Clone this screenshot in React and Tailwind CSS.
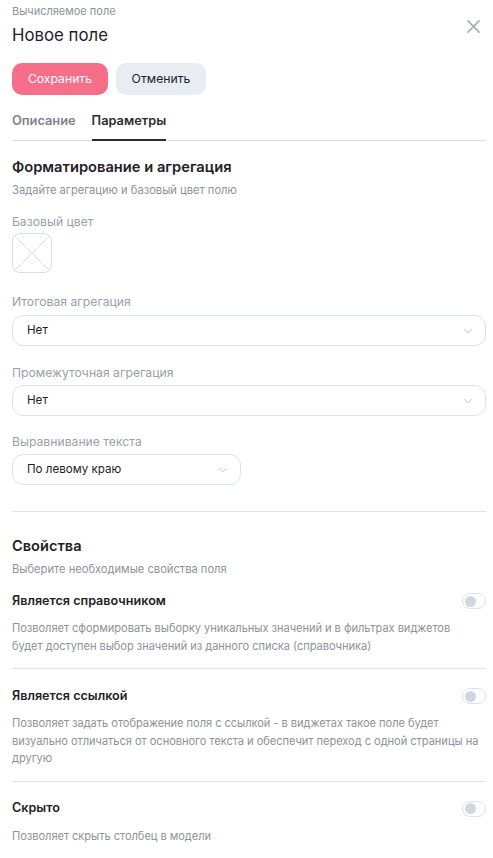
import React from "react";
import { ChevronDown } from "lucide-react";

const font = { fontFamily: "Inter, 'Noto Sans', sans-serif" };

const Select = ({ value, className = "" }) => (
  <div
    className={`flex items-center justify-between h-[31px] pl-[14px] pr-[10px] border border-[#dde1ea] rounded-[11px] ${className}`}
  >
    <span className="text-[11.6px] text-[#1f2129]">{value}</span>
    <ChevronDown className="w-[14px] h-[14px] text-[#b3b8c4]" strokeWidth={1.4} />
  </div>
);

const Toggle = () => (
  <div className="w-[24px] h-[16px] rounded-full border border-[#dde1ea] flex items-center pl-[2px]">
    <div className="w-[11px] h-[11px] rounded-full bg-[#d0d6e1]" />
  </div>
);

const Property = ({ title, first, children }) => (
  <div className={`border-b border-[#dfe2ea] pb-[13px] ${first ? "pt-[15px]" : "pt-[18px]"}`}>
    <div className="flex items-center justify-between h-[18px]">
      <span className="text-[12.6px] font-semibold text-[#1f2129]">{title}</span>
      <Toggle />
    </div>
    <p className="mt-[10px] text-[11.1px] tracking-[-0.05px] leading-[17.5px] text-[#8e929c] whitespace-nowrap">
      {children}
    </p>
  </div>
);

export default function App() {
  return (
    <div className="w-[493px] h-[858px] overflow-hidden bg-white pl-[12px] pr-[7px]" style={font}>
      {/* Header */}
      <div className="flex justify-between pt-[3px]">
        <div>
          <div className="text-[11px] text-[#8e929c] leading-[16px]">Вычисляемое поле</div>
          <div className="text-[16.8px] text-[#1f2129] leading-[24px] mt-[4px]">Новое поле</div>
        </div>
        <svg viewBox="0 0 14 14" className="w-[13px] h-[13px] mt-[17px] mr-[6px]">
          <path d="M1 1L13 13M13 1L1 13" stroke="#a9aebb" strokeWidth="1.8" strokeLinecap="round" />
        </svg>
      </div>

      <div className="flex gap-[8px] mt-[16px]">
        <button className="h-[32px] w-[96px] rounded-[10px] bg-[#f76e8b] text-white text-[12.2px]">
          Сохранить
        </button>
        <button className="h-[32px] w-[90px] rounded-[10px] bg-[#e9ecf3] text-[#1f2129] text-[12.2px]">
          Отменить
        </button>
      </div>

      {/* Tabs */}
      <div className="flex gap-[16px] mt-[17px] border-b border-[#dcdfe7]">
        <div className="pb-[9px] leading-[18px] text-[12.8px] font-semibold text-[#7d828e] border-b-2 border-transparent -mb-px">
          Описание
        </div>
        <div className="pb-[9px] leading-[18px] text-[12.8px] font-semibold text-[#2a2c33] border-b-2 border-[#2a2c33] -mb-px">
          Параметры
        </div>
      </div>

      {/* Formatting */}
      <div className="pt-[16px] pb-[26px] border-b border-[#dfe2ea]">
        <h2 className="text-[14.7px] font-semibold text-[#1f2129] leading-[20px]">Форматирование и агрегация</h2>
        <p className="mt-[5px] text-[11.15px] text-[#8e929c] leading-[16px]">Задайте агрегацию и базовый цвет полю</p>

        <div className="mt-[15px] text-[12.2px] text-[#9aa0ad] leading-[18px]">Базовый цвет</div>
        <div className="mt-[2px] w-[40px] h-[40px] rounded-[8px] border border-[#d8dce5] overflow-hidden">
          <svg viewBox="0 0 40 40" className="w-full h-full">
            <line x1="0" y1="0" x2="40" y2="40" stroke="#dadee6" strokeWidth="1" />
            <line x1="40" y1="0" x2="0" y2="40" stroke="#dadee6" strokeWidth="1" />
          </svg>
        </div>

        <div className="mt-[20px] text-[12.2px] text-[#9aa0ad] leading-[18px]">Итоговая агрегация</div>
        <Select value="Нет" className="mt-[4px]" />

        <div className="mt-[18px] text-[12.2px] text-[#9aa0ad] leading-[18px]">Промежуточная агрегация</div>
        <Select value="Нет" className="mt-[3px]" />

        <div className="mt-[17px] text-[12.2px] text-[#9aa0ad] leading-[18px]">Выравнивание текста</div>
        <Select value="По левому краю" className="mt-[3px] w-[229px]" />
      </div>

      {/* Properties */}
      <div className="pt-[24px]">
        <h2 className="text-[14.6px] font-semibold text-[#1f2129] leading-[20px]">Свойства</h2>
        <p className="mt-[5px] text-[11.15px] text-[#8e929c] leading-[16px]">Выберите необходимые свойства поля</p>
        <Property title="Является справочником" first>
          Позволяет сформировать выборку уникальных значений и в фильтрах виджетов
          <br />
          будет доступен выбор значений из данного списка (справочника)
        </Property>
        <Property title="Является ссылкой">
          Позволяет задать отображение поля с ссылкой - в виджетах такое поле будет
          <br />
          визуально отличаться от основного текста и обеспечит переход с одной страницы на
          <br />
          другую
        </Property>
        <Property title="Скрыто">Позволяет скрыть столбец в модели</Property>
      </div>
    </div>
  );
}
